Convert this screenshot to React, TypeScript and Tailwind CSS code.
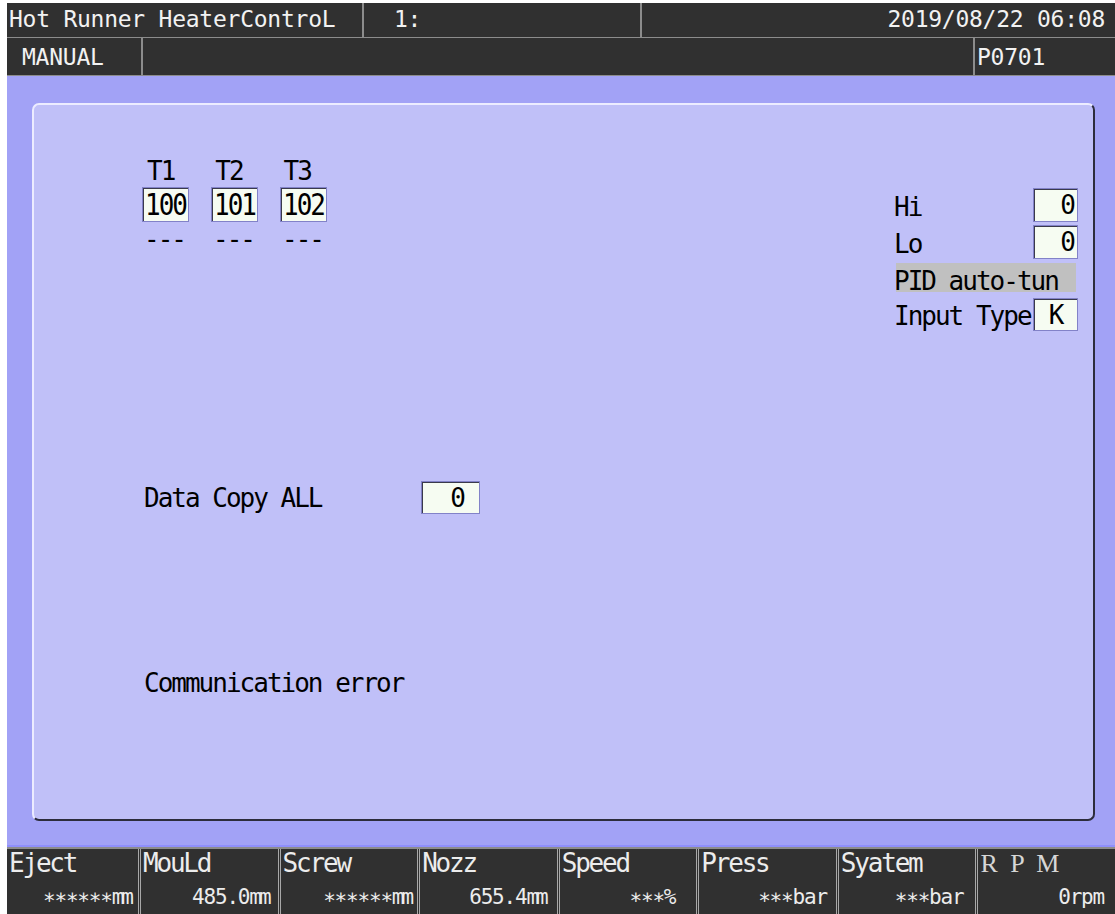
import React from "react";

const fieldBox =
  "flex items-center bg-[#f6fcf2] border border-[#8282c8] shadow-[inset_1px_1px_0_#3a3a4c] text-black";

function Header() {
  return (
    <header className="flex flex-col bg-[#303030] text-[#f2f2f2] text-[23px] tracking-[-0.25px] leading-none">
      <div className="h-[35px] flex border-b border-[#8c8c8c]">
        <div className="w-[355px] pl-[2px] pt-[5px] whitespace-pre">Hot Runner HeaterControL</div>
        <div className="w-[278px] border-l-2 border-[#8c8c8c] pl-[30px] pt-[5px]">1:</div>
        <div className="flex-1 border-l-2 border-[#8c8c8c] pr-[10px] pt-[5px] text-right">2019/08/22 06:08</div>
      </div>
      <div className="h-[38px] flex border-b border-[#8c8c8c]">
        <div className="w-[134px] pl-[15px] pt-[8px]">MANUAL</div>
        <div className="w-[832px] border-l-2 border-[#8c8c8c]" />
        <div className="flex-1 border-l-2 border-[#8c8c8c] pl-[2px] pt-[8px]">P0701</div>
      </div>
    </header>
  );
}

function ValueRow({ label, value }: { label: string; value: string }) {
  return (
    <div className="h-[34px] flex items-start justify-between">
      <span className="mt-[4px]">{label}</span>
      <div className={`w-[45px] h-[34px] justify-end pr-[3px] ${fieldBox}`}>{value}</div>
    </div>
  );
}

function Panel() {
  const temps = ["100", "101", "102"];
  return (
    <section className="flex-1 flex justify-between rounded-[7px] border-2 border-t-[#ececff] border-l-[#ececff] border-b-[#2c2c3c] border-r-[#2c2c3c] bg-[#c0c0f8] pl-[108px] pr-[15px] text-black text-[26px] tracking-[-2px] leading-[30px]">
      {/* zone temperatures and copy / status lines */}
      <div className="pt-[51px] flex flex-col">
        <div className="h-[30px] pl-[5px] whitespace-pre">T1   T2   T3</div>
        <div className="mt-[1px] flex gap-[22px]">
          {temps.map((t) => (
            <div key={t} className={`w-[47px] h-[35px] justify-center ${fieldBox}`}>
              <span className="inline-block scale-y-[1.15]">{t}</span>
            </div>
          ))}
        </div>
        <div className="mt-[2px] h-[30px] flex gap-[22px]">
          {temps.map((t) => (
            <div key={t} className="w-[47px] pl-[2px]">
              ---
            </div>
          ))}
        </div>
        <div className="mt-[227px] h-[33px] flex items-center">
          <div className="w-[279px] pl-[2px] whitespace-pre">Data Copy ALL</div>
          <div className={`w-[59px] h-[33px] justify-end pr-[15px] ${fieldBox}`}>0</div>
        </div>
        <div className="mt-[154px] h-[30px] pl-[2px] whitespace-pre">Communication error</div>
      </div>

      {/* alarm limits and sensor settings */}
      <div className="w-[184px] pt-[83px] flex flex-col">
        <ValueRow label="Hi" value="0" />
        <div className="mt-[3px]">
          <ValueRow label="Lo" value="0" />
        </div>
        <div className="mt-[4px] ml-[2px] w-[180px] h-[29px] bg-[#c0c0c0] pt-[3px] whitespace-pre">
          <span className="-ml-[2px]">PID auto-tun</span>
        </div>
        <div className="mt-[6px] h-[33px] flex items-start justify-between">
          <span className="mt-[3px] whitespace-pre">Input Type</span>
          <div className={`w-[45px] h-[33px] justify-center ${fieldBox}`}>K</div>
        </div>
      </div>
    </section>
  );
}

type Cell = { label: React.ReactNode; value: React.ReactNode; pr: string };

// millimetre unit: two m's squeezed into one narrow cell
const MM = <span className="tracking-[-3px] pr-[3px]">mm</span>;

const cells: Cell[] = [
  { label: "Eject", value: <>∗∗∗∗∗∗{MM}</>, pr: "pr-[4px]" },
  { label: "MouLd", value: <>485.0{MM}</>, pr: "pr-[6px]" },
  { label: "Screw", value: <>∗∗∗∗∗∗{MM}</>, pr: "pr-[3px]" },
  { label: "Nozz", value: <>655.4{MM}</>, pr: "pr-[8px]" },
  { label: "Speed", value: "∗∗∗%", pr: "pr-[21px]" },
  { label: "Press", value: "∗∗∗bar", pr: "pr-[9px]" },
  { label: "Syatem", value: "∗∗∗bar", pr: "pr-[12px]" },
  {
    label: <span className="font-['Liberation_Serif',serif] tracking-[3px] text-[#d6d6d6]">R P M</span>,
    value: "0rpm",
    pr: "pr-[11px]",
  },
];

function Footer() {
  return (
    <footer className="h-[67px] border-t-2 border-[#8c8c8c] bg-[#303030] grid grid-cols-[131px_repeat(7,1fr)] text-[#ececec] overflow-hidden">
      {cells.map((c, i) => (
        <div
          key={i}
          className={`flex flex-col pt-[1px] overflow-hidden ${i > 0 ? "border-l-[3px] border-double border-[#a8a8a8] pl-[2px]" : "pl-[2px]"}`}
        >
          <div className="h-[26px] text-[26px] leading-none tracking-[-2.2px] whitespace-pre">{c.label}</div>
          <div className={`mt-[11px] h-[22px] text-[21px] leading-none tracking-[-1.2px] text-right whitespace-pre ${c.pr}`}>
            {c.value}
          </div>
        </div>
      ))}
    </footer>
  );
}

export default function App() {
  return (
    <div className="w-[1115px] h-[914px] overflow-hidden bg-white pl-[7px] pt-[3px] flex flex-col font-['DejaVu_Sans_Mono',monospace]">
      <Header />
      <main className="flex-1 flex flex-col bg-[#a2a2f6] pl-[25px] pr-[20px] pt-[27px] pb-[24px] border-b-2 border-[#8f8ffc]">
        <Panel />
      </main>
      <Footer />
    </div>
  );
}
